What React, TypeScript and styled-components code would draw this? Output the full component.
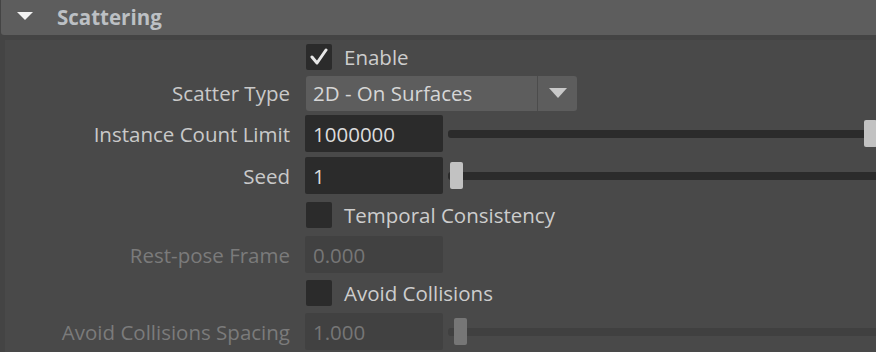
import React from "react";
import styled, { createGlobalStyle } from "styled-components";

const GlobalStyle = createGlobalStyle`
  body {
    margin: 0;
    background-color: #444444;
    font-family: "Open Sans", "Noto Sans", sans-serif;
  }
`;

const Page = styled.div`
  width: 876px;
  height: 352px;
  overflow: hidden;
  background-color: #444444;
`;

const Header = styled.div`
  height: 35px;
  margin-left: 1px;
  background-color: #5d5d5d;
  border-bottom-left-radius: 3px;
  display: flex;
  align-items: center;
`;

const Arrow = styled.div`
  width: 0;
  height: 0;
  margin-left: 16px;
  margin-top: -3px;
  border-left: 8px solid transparent;
  border-right: 8px solid transparent;
  border-top: 8px solid #f2f2f2;
`;

const Title = styled.span`
  margin-left: 24px;
  margin-top: -2px;
  color: #bcc0c4;
  font-weight: 700;
  font-size: 20.5px;
`;

const Body = styled.div`
  margin: 5px 0 0 5px;
  background-color: #494949;
  height: 312px;
  display: flex;
  flex-direction: column;
`;

const Row = styled.div<{ $h: number }>`
  height: ${(p) => p.$h}px;
  display: flex;
  align-items: center;
`;

const Label = styled.div<{ $disabled?: boolean }>`
  width: 300px;
  flex: none;
  text-align: right;
  font-size: 20.5px;
  white-space: nowrap;
  color: ${(p) => (p.$disabled ? "#7b7b7b" : "#c9c9c9")};
  padding-right: 15px;
  box-sizing: border-box;
`;

const Spacer = styled.div`
  width: 301px;
  flex: none;
`;

const Check = styled.div`
  width: 26px;
  height: 26px;
  border-radius: 2px;
  background-color: #2b2b2b;
  display: flex;
  align-items: center;
  justify-content: center;
  flex: none;
`;

const CheckText = styled.span`
  margin-left: 12px;
  font-size: 20.5px;
  color: #cdcdcd;
`;

const Dropdown = styled.div`
  width: 271px;
  height: 35px;
  margin-left: 1px;
  background-color: #5d5d5d;
  border-radius: 3px;
  display: flex;
  align-items: center;
`;

const DropValue = styled.div`
  flex: 1;
  padding-left: 7px;
  font-size: 20.5px;
  color: #d6d6d6;
  border-right: 1px solid #4c4c4c;
  height: 100%;
  display: flex;
  align-items: center;
`;

const DropButton = styled.div`
  width: 39px;
  height: 100%;
  display: flex;
  align-items: center;
  justify-content: center;
`;

const DropArrow = styled.div`
  width: 0;
  height: 0;
  border-left: 9px solid transparent;
  border-right: 9px solid transparent;
  border-top: 10px solid #c8c8c8;
`;

const Field = styled.div<{ $disabled?: boolean }>`
  width: 138px;
  height: 37px;
  flex: none;
  box-sizing: border-box;
  padding-left: 8px;
  border-radius: 2px;
  background-color: ${(p) => (p.$disabled ? "#414141" : "#2b2b2b")};
  color: ${(p) => (p.$disabled ? "#767676" : "#dcdcdc")};
  font-size: 20.5px;
  display: flex;
  align-items: center;
`;

const Slider = styled.div`
  flex: 1;
  margin-left: 5px;
  height: 28px;
  display: flex;
  align-items: center;
  position: relative;
`;

const Track = styled.div<{ $disabled?: boolean }>`
  width: 100%;
  height: 8px;
  border-radius: 3px 0 0 3px;
  background-color: ${(p) => (p.$disabled ? "#404040" : "#2b2b2b")};
`;

const Handle = styled.div<{ $disabled?: boolean }>`
  position: absolute;
  top: 0;
  width: 13px;
  height: 27px;
  border-radius: 2px;
  background-color: ${(p) => (p.$disabled ? "#767676" : "#c2c2c2")};
`;

const Tick = () => (
  <svg width="20" height="18" viewBox="0 0 20 18">
    <polyline
      points="3,9 8,15 17,2"
      fill="none"
      stroke="#e6e6e6"
      strokeWidth="3"
      strokeLinecap="round"
      strokeLinejoin="round"
    />
  </svg>
);

const SliderBox: React.FC<{ at: number; disabled?: boolean }> = ({ at, disabled }) => (
  <Slider>
    <Track $disabled={disabled} />
    <Handle $disabled={disabled} style={{ left: at }} />
  </Slider>
);

const App: React.FC = () => {
  return (
    <Page>
      <GlobalStyle />
      <Header>
        <Arrow />
        <Title>Scattering</Title>
      </Header>
      <Body>
        <Row $h={34}>
          <Spacer />
          <Check>
            <Tick />
          </Check>
          <CheckText>Enable</CheckText>
        </Row>
        <Row $h={38}>
          <Label>Scatter Type</Label>
          <Dropdown>
            <DropValue>2D - On Surfaces</DropValue>
            <DropButton>
              <DropArrow />
            </DropButton>
          </Dropdown>
        </Row>
        <Row $h={43}>
          <Label>Instance Count Limit</Label>
          <Field>1000000</Field>
          <SliderBox at={416} />
        </Row>
        <Row $h={41}>
          <Label>Seed</Label>
          <Field>1</Field>
          <SliderBox at={2} />
        </Row>
        <Row $h={38}>
          <Spacer />
          <Check />
          <CheckText>Temporal Consistency</CheckText>
        </Row>
        <Row $h={41}>
          <Label $disabled>Rest-pose Frame</Label>
          <Field $disabled>0.000</Field>
        </Row>
        <Row $h={36}>
          <Spacer />
          <Check />
          <CheckText>Avoid Collisions</CheckText>
        </Row>
        <Row $h={41}>
          <Label $disabled>Avoid Collisions Spacing</Label>
          <Field $disabled>1.000</Field>
          <SliderBox at={6} disabled />
        </Row>
      </Body>
    </Page>
  );
};

export default App;
